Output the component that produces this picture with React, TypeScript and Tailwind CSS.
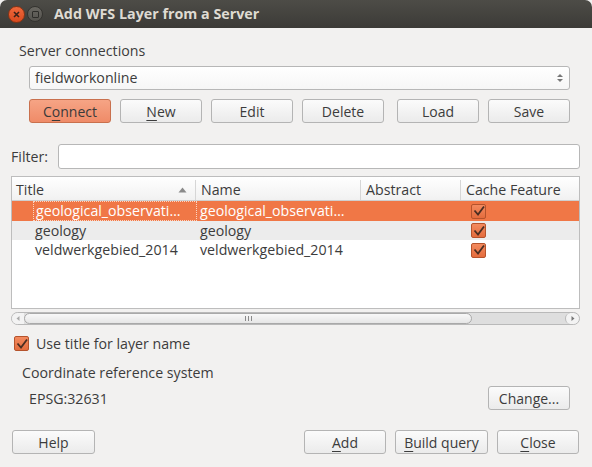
import React from "react";

const font = { fontFamily: '"Open Sans", "Liberation Sans", sans-serif' };

function Btn({
  label,
  mnemonic,
  className = "",
  primary = false,
}: {
  label: string;
  mnemonic?: number;
  className?: string;
  primary?: boolean;
}) {
  const text =
    mnemonic === undefined ? (
      label
    ) : (
      <>
        {label.slice(0, mnemonic)}
        <span className="underline underline-offset-[3px]">{label[mnemonic]}</span>
        {label.slice(mnemonic + 1)}
      </>
    );
  return (
    <div
      className={`h-[24px] flex items-center justify-center rounded-[3px] border text-[14px] ${
        primary
          ? "border-[#c9704d] bg-gradient-to-b from-[#f6a485] to-[#ef8b68] text-[#3a3a3a]"
          : "border-[#b4b4b4] bg-gradient-to-b from-[#fbfbfb] to-[#ebebeb] text-[#3c3c3c]"
      } ${className}`}
    >
      {text}
    </div>
  );
}

function Check({ size = 15 }: { size?: number }) {
  return (
    <div
      className="flex items-center justify-center rounded-[2px] border border-[#b5532c] bg-gradient-to-b from-[#f38a5e] to-[#e46c3d]"
      style={{ width: size, height: size }}
    >
      <svg width="12" height="12" viewBox="0 0 12 12">
        <path d="M1.5 5.5 L5 9.5 L11 1.5" fill="none" stroke="#4a2e22" strokeWidth="1.8" />
      </svg>
    </div>
  );
}

const rows = [
  { title: "geological_observati…", name: "geological_observati…", bg: "bg-[#f07746]", fg: "text-white", sel: true },
  { title: "geology", name: "geology", bg: "bg-[#ececec]", fg: "text-[#3c3c3c]", sel: false },
  { title: "veldwerkgebied_2014", name: "veldwerkgebied_2014", bg: "bg-white", fg: "text-[#3c3c3c]", sel: false },
];

export default function App() {
  return (
    <div className="w-[592px] h-[467px] bg-[#f2f1f0] text-[#3c3c3c] overflow-hidden" style={font}>
      {/* title bar */}
      <div className="h-[28px] rounded-t-[7px] bg-gradient-to-b from-[#4d4c47] to-[#3c3b37] flex items-center">
        <div className="ml-[8px] w-[17px] h-[17px] rounded-full bg-gradient-to-b from-[#f0683b] to-[#d94a1e] border border-[#8a3414] flex items-center justify-center">
          <svg width="7" height="7" viewBox="0 0 7 7">
            <path d="M1 1 L6 6 M6 1 L1 6" stroke="#3b2219" strokeWidth="1.6" />
          </svg>
        </div>
        <div className="ml-[2px] w-[16px] h-[16px] rounded-full bg-gradient-to-b from-[#6a6862] to-[#55534e] border border-[#34332f] flex items-center justify-center">
          <div className="w-[7px] h-[7px] border-[1.5px] border-[#2e2d2a] rounded-[1px]" />
        </div>
        <div className="ml-[11px] text-[14.3px] font-bold text-[#dfdbd2]">
          Add WFS Layer from a Server
        </div>
      </div>

      {/* server connections */}
      <div className="ml-[19px] mt-[14px] h-[18px] leading-[18px] text-[14.2px]">Server connections</div>
      <div className="ml-[29px] mt-[6px] w-[541px] h-[24px] rounded-[3px] border border-[#b7b7b7] bg-gradient-to-b from-white to-[#f6f6f6] flex items-center justify-between">
        <span className="ml-[5px] text-[14.2px]">fieldworkonline</span>
        <svg width="8" height="14" viewBox="0 0 8 14" className="mr-[5px]">
          <path d="M1 6 L4 3 L7 6 Z" fill="#777" />
          <path d="M1 8 L4 11 L7 8 Z" fill="#777" />
        </svg>
      </div>

      <div className="ml-[29px] mt-[9px] flex">
        <Btn label="Connect" mnemonic={1} primary className="w-[82px]" />
        <Btn label="New" mnemonic={0} className="w-[82px] ml-[9px]" />
        <Btn label="Edit" className="w-[82px] ml-[9px]" />
        <Btn label="Delete" className="w-[82px] ml-[9px]" />
        <Btn label="Load" className="w-[82px] ml-[13px]" />
        <Btn label="Save" className="w-[82px] ml-[9px]" />
      </div>

      {/* filter */}
      <div className="mt-[21px] flex items-center">
        <span className="ml-[11px] text-[14.2px] w-[47px]">Filter:</span>
        <div className="w-[522px] h-[25px] rounded-[3px] border border-[#b7b7b7] bg-white" />
      </div>

      {/* table */}
      <div className="ml-[11px] mt-[7px] w-[569px] h-[133px] border border-[#bdbdbd] bg-white">
        <div className="h-[24px] flex border-b border-[#cfcfcf] bg-gradient-to-b from-white to-[#f1f1f1] text-[14.2px] pt-[3px]">
          <div className="w-[184px] flex items-center justify-between border-r border-[#d6d6d6] pl-[4px] pr-[8px]">
            <span>Title</span>
            <svg width="9" height="6" viewBox="0 0 9 6">
              <path d="M0.5 5.5 L4.5 0.5 L8.5 5.5 Z" fill="#8a8a8a" />
            </svg>
          </div>
          <div className="w-[165px] flex items-center border-r border-[#d6d6d6] pl-[5px]">Name</div>
          <div className="w-[100px] flex items-center border-r border-[#d6d6d6] pl-[5px]">Abstract</div>
          <div className="flex-1 flex items-center pl-[5px]">Cache Feature</div>
        </div>
        {rows.map((r, i) => (
          <div key={i} className={`flex ${i === 1 ? "h-[19px]" : "h-[20px]"} ${r.bg} ${r.fg} text-[14.2px]`}>
            <div className="w-[185px] pl-[21px] flex">
              <div
                className={`flex-1 flex items-center pl-[2px] overflow-hidden whitespace-nowrap ${
                  r.sel ? "border border-dotted border-[#fbd5c3]" : ""
                }`}
              >
                {r.title}
              </div>
            </div>
            <div className="w-[165px] flex items-center pl-[3px] whitespace-nowrap overflow-hidden">{r.name}</div>
            <div className="w-[100px]" />
            <div className="flex-1 flex items-center pl-[9px]">
              <Check />
            </div>
          </div>
        ))}
      </div>

      {/* horizontal scrollbar */}
      <div className="ml-[11px] mt-[3px] w-[569px] h-[13px] rounded-full border border-[#b9b9b9] bg-[#dedede] flex items-center overflow-hidden">
        <div className="w-[12px] h-full bg-[#f3f3f3] flex items-center justify-center">
          <svg width="4" height="5" viewBox="0 0 4 5">
            <path d="M3.5 0 L0.5 2.5 L3.5 5 Z" fill="#aaa" />
          </svg>
        </div>
        <div className="w-[448px] h-full rounded-full border border-[#a9a9a9] bg-gradient-to-b from-[#f8f8f8] to-[#e6e6e6] flex items-center justify-center">
          <svg width="7" height="5" viewBox="0 0 7 5">
            <path d="M0.5 0 V5 M3.5 0 V5 M6.5 0 V5" stroke="#8a8a8a" strokeWidth="1" />
          </svg>
        </div>
        <div className="flex-1" />
        <div className="w-[14px] h-full rounded-full border-l border-[#b9b9b9] bg-[#f3f3f3] flex items-center justify-center">
          <svg width="4" height="5" viewBox="0 0 4 5">
            <path d="M0.5 0 L3.5 2.5 L0.5 5 Z" fill="#777" />
          </svg>
        </div>
      </div>

      {/* use title */}
      <div className="ml-[14px] mt-[8px] flex items-center">
        <Check />
        <span className="ml-[7px] text-[14.2px]">Use title for layer name</span>
      </div>

      <div className="ml-[22px] mt-[10px] text-[14.2px] h-[18px] leading-[18px]">Coordinate reference system</div>
      <div className="flex items-center mt-[4px]">
        <span className="ml-[29px] text-[14.2px] flex-1">EPSG:32631</span>
        <Btn label="Change..." className="w-[82px] mr-[22px]" />
      </div>

      {/* bottom buttons */}
      <div className="mt-[20px] flex">
        <Btn label="Help" className="w-[83px] ml-[12px]" />
        <Btn label="Add" mnemonic={0} className="w-[82px] ml-[209px]" />
        <Btn label="Build query" mnemonic={0} className="w-[93px] ml-[9px]" />
        <Btn label="Close" mnemonic={0} className="w-[82px] ml-[9px]" />
      </div>
    </div>
  );
}
